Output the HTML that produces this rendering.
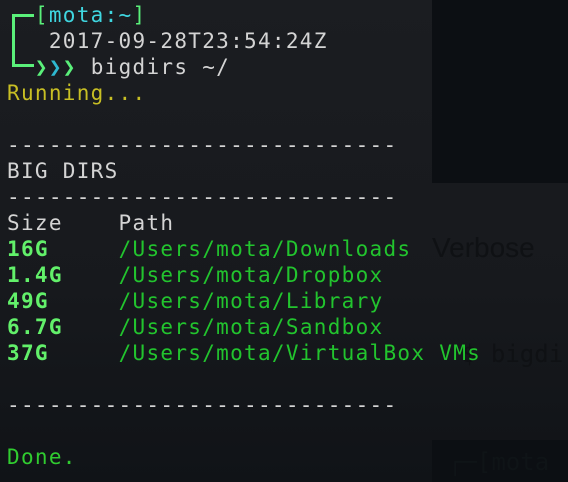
<!DOCTYPE html>
<html><head><meta charset="utf-8"><style>
html,body{margin:0;padding:0}
body{width:568px;height:482px;overflow:hidden;position:relative;background:linear-gradient(180deg,#1b1d21 0%,#17191d 60%,#101317 100%);}
.blk{position:absolute;background:#0c0f13}
.bg{position:absolute;font-family:"Liberation Sans",sans-serif;color:#0f1114}
.ln{position:absolute;background:#5af07a}
pre{position:absolute;left:7px;top:2px;margin:0;font-family:"DejaVu Sans Mono","Liberation Mono",monospace;font-size:21px;letter-spacing:1.3px;line-height:26px;color:#d4d4d4}
.g{color:#5af07a}.c{color:#3fd6e0}.y{color:#c8bf24}.b{color:#62f06a;font-weight:bold}.p{color:#22c42e}.d{color:#30cc30}.t{color:#2eb8d0}
</style></head><body>
<div class="blk" style="left:432px;top:0;width:136px;height:183px"></div>
<div class="blk" style="left:432px;top:440px;width:136px;height:42px"></div>
<div class="bg" style="left:432px;top:232px;font-size:28px">Verbose</div>
<div class="bg" style="left:462px;top:340px;font-size:24px;font-family:'DejaVu Sans Mono',monospace">$ bigdi</div>
<div class="bg" style="left:448px;top:448px;font-size:24px;font-family:'DejaVu Sans Mono',monospace;color:#0f1417">┌─[mota</div>
<div class="ln" style="left:12px;top:14px;width:3px;height:53px"></div>
<div class="ln" style="left:12px;top:14px;width:22px;height:3px"></div>
<div class="ln" style="left:12px;top:64px;width:22px;height:3px"></div>
<pre>  <span class="g">[</span><span class="c">mota:~</span><span class="g">]</span>
   2017-09-28T23:54:24Z
  <span class="g"><b>❯</b></span><span class="t"><b>❯</b></span><span class="g"><b>❯</b></span> bigdirs ~/
<span class="y">Running...</span>

----------------------------
BIG DIRS
----------------------------
Size    Path
<span class="b">16G</span>     <span class="p">/Users/mota/Downloads</span>
<span class="b">1.4G</span>    <span class="p">/Users/mota/Dropbox</span>
<span class="b">49G</span>     <span class="p">/Users/mota/Library</span>
<span class="b">6.7G</span>    <span class="p">/Users/mota/Sandbox</span>
<span class="b">37G</span>     <span class="p">/Users/mota/VirtualBox VMs</span>

----------------------------

<span class="d">Done.</span></pre>
</body></html>
